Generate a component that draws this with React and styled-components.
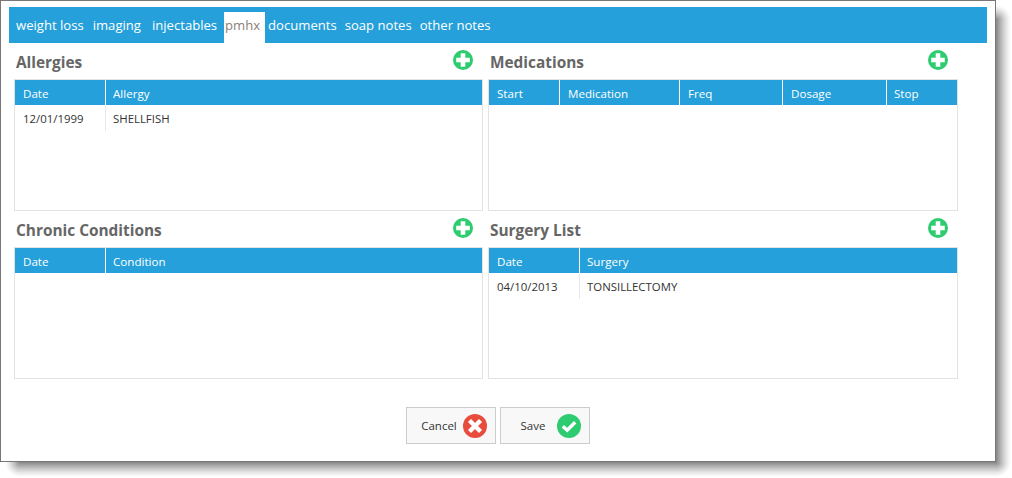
import React from "react";
import styled, { createGlobalStyle } from "styled-components";

const Global = createGlobalStyle`
  html, body {
    margin: 0;
    background: #fff;
  }
  * { box-sizing: border-box; }
`;

// soft drop shadow stops, used by the strips and corners below
const fade = "#868686 0, #a4a4a4 20%, #c8c8c8 45%, #e6e6e6 70%, #f8f8f8 90%, #fff 100%";

const Frame = styled.div`
  position: relative;
  width: 1012px;
  height: 478px;
  overflow: hidden;

  &::before {
    content: "";
    position: absolute;
    inset: 0;
    background-repeat: no-repeat;
    background-image:
      radial-gradient(circle 15px at 0 15px, ${fade}),
      linear-gradient(to right, ${fade}),
      radial-gradient(circle 15px at 0 0, ${fade}),
      linear-gradient(to bottom, ${fade}),
      radial-gradient(circle 15px at 15px 0, ${fade});
    background-size: 15px 15px, 15px 442px, 15px 15px, 976px 15px, 15px 15px;
    background-position: 996px 5px, 996px 20px, 996px 462px, 20px 462px, 5px 462px;
  }
`;

const Win = styled.div`
  position: relative;
  width: 996px;
  height: 462px;
  background: #fff;
  border: 1px solid #777;
  padding: 6px 8px 0;
  font-family: "Open Sans", sans-serif;
  display: flex;
  flex-direction: column;
`;

const TabBar = styled.div`
  height: 36px;
  background: #26a0da;
  display: flex;
  align-items: flex-end;
  padding-left: 3px;
  flex-shrink: 0;
`;

const Tab = styled.div`
  height: 31px;
  margin-left: ${(p) => p.$gap || 0}px;
  padding: 4px 4px 0;
  font-size: 13.1px;
  line-height: 18px;
  color: #fff;
`;

const ActiveTab = styled(Tab)`
  margin: 0 -1px 0 3px;
  padding: 4px 5px 0 1px;
  color: #8a7f78;
  background: #fff;
`;

const Grid = styled.div`
  display: grid;
  grid-template-columns: 469px 470px;
  column-gap: 5px;
  margin-left: 5px;
`;

const Section = styled.section`
  display: flex;
  flex-direction: column;
`;

const SectionHead = styled.div`
  height: 36px;
  display: flex;
  align-items: center;
  justify-content: space-between;
  padding: 3px 10px 0 2px;
`;

const Title = styled.h2`
  margin: 0;
  font-size: 15.4px;
  font-weight: 700;
  color: #666;
`;

const Panel = styled.div`
  height: 132px;
  border: 1px solid #e3e3e3;
  display: flex;
  flex-direction: column;
`;

const HeadRow = styled.div`
  height: 26px;
  background: #26a0da;
  display: flex;
  border-bottom: 1px solid #fff;
`;

const HeadCell = styled.div`
  width: ${(p) => (p.$w ? `${p.$w}px` : "auto")};
  flex: ${(p) => (p.$w ? "none" : 1)};
  padding-left: ${(p) => (p.$w ? 8 : 7)}px;
  font-size: 11.6px;
  line-height: 27px;
  color: #fff;
  border-right: ${(p) => (p.$w ? "1px solid #fff" : "none")};
`;

const Row = styled.div`
  display: flex;
  height: 25px;
`;

const Cell = styled.div`
  width: ${(p) => (p.$w ? `${p.$w}px` : "auto")};
  flex: ${(p) => (p.$w ? "none" : 1)};
  padding-left: ${(p) => (p.$w ? 8 : 7)}px;
  font-size: 11.4px;
  line-height: 25px;
  color: #333;
  border-right: ${(p) => (p.$w ? "1px solid #e8e8e8" : "none")};
`;

const Actions = styled.div`
  display: flex;
  justify-content: center;
  gap: 4px;
  margin-top: 28px;
`;

const Button = styled.button`
  width: 90px;
  height: 37px;
  background: #f8f8f8;
  border: 1px solid #ccc;
  padding: 0;
  display: flex;
  align-items: center;
  font-family: "Open Sans", sans-serif;
  font-size: 11.5px;
  color: #333;
`;

const ButtonLabel = styled.span`
  width: 56px;
  padding-left: 8px;
  text-align: center;
`;

const PlusSvg = styled.svg`
  margin-bottom: 6px;
`;

const PlusIcon = () => (
  <PlusSvg width="20" height="20" viewBox="0 0 20 20">
    <circle cx="10" cy="10" r="10" fill="#2ecc71" />
    <path d="M10 3.2v13.6M3.2 10h13.6" stroke="#fff" strokeWidth="4.6" />
  </PlusSvg>
);

const CancelIcon = () => (
  <svg width="24" height="24" viewBox="0 0 24 24">
    <circle cx="12" cy="12" r="12" fill="#e74c3c" />
    <path d="M6.5 6.5l11 11M17.5 6.5l-11 11" stroke="#fff" strokeWidth="4.4" />
  </svg>
);

const SaveIcon = () => (
  <svg width="24" height="24" viewBox="0 0 24 24">
    <circle cx="12" cy="12" r="12" fill="#2ecc71" />
    <path d="M5.8 12.2l4.4 4 8-8" fill="none" stroke="#fff" strokeWidth="3.4" />
  </svg>
);

const tabs = [
  { label: "weight loss" },
  { label: "imaging", gap: 1 },
  { label: "injectables", gap: 3 },
  { label: "pmhx", active: true },
  { label: "documents" },
  { label: "soap notes" },
  { label: "other notes" },
];

const sections = [
  { title: "Allergies", cols: [["Date", 91], ["Allergy"]], row: ["12/01/1999", "SHELLFISH"] },
  {
    title: "Medications",
    cols: [["Start", 71], ["Medication", 120], ["Freq", 103], ["Dosage", 104], ["Stop"]],
  },
  { title: "Chronic Conditions", cols: [["Date", 91], ["Condition"]] },
  { title: "Surgery List", cols: [["Date", 91], ["Surgery"]], row: ["04/10/2013", "TONSILLECTOMY"] },
];

export default function App() {
  return (
    <Frame>
      <Global />
      <Win>
        <TabBar>
          {tabs.map((t) =>
            t.active ? (
              <ActiveTab key={t.label}>{t.label}</ActiveTab>
            ) : (
              <Tab key={t.label} $gap={t.gap}>
                {t.label}
              </Tab>
            )
          )}
        </TabBar>
        <Grid>
          {sections.map((s) => (
            <Section key={s.title}>
              <SectionHead>
                <Title>{s.title}</Title>
                <PlusIcon />
              </SectionHead>
              <Panel>
                <HeadRow>
                  {s.cols.map(([name, w]) => (
                    <HeadCell key={name} $w={w}>
                      {name}
                    </HeadCell>
                  ))}
                </HeadRow>
                {s.row && (
                  <Row>
                    <Cell $w={s.cols[0][1]}>{s.row[0]}</Cell>
                    <Cell>{s.row[1]}</Cell>
                  </Row>
                )}
              </Panel>
            </Section>
          ))}
        </Grid>
        <Actions>
          <Button>
            <ButtonLabel>Cancel</ButtonLabel>
            <CancelIcon />
          </Button>
          <Button>
            <ButtonLabel>Save</ButtonLabel>
            <SaveIcon />
          </Button>
        </Actions>
      </Win>
    </Frame>
  );
}
